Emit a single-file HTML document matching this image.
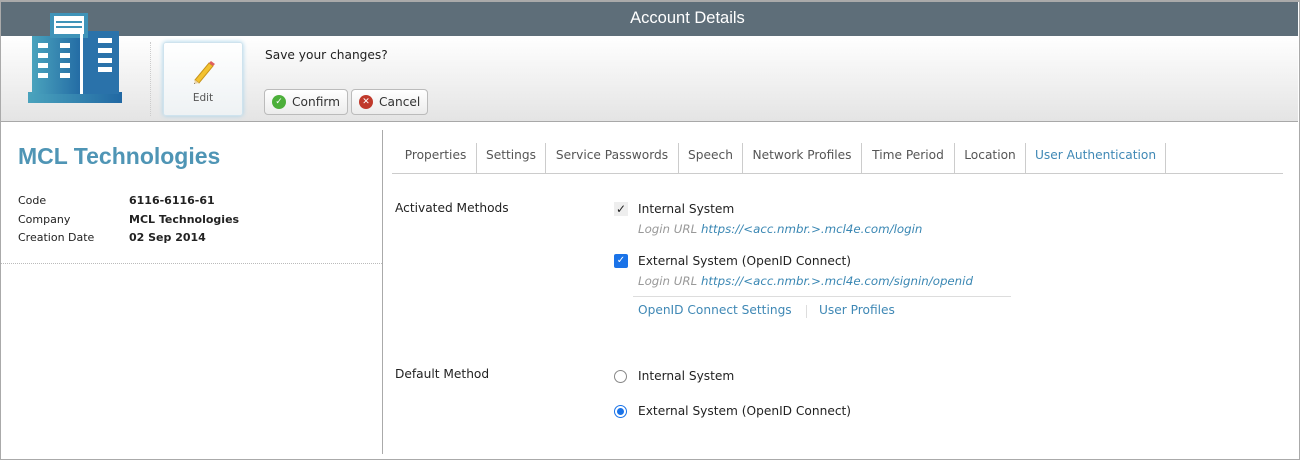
<!DOCTYPE html>
<html><head><meta charset="utf-8"><style>
*{margin:0;padding:0;box-sizing:border-box}
body{width:1300px;height:460px;background:#fff;font-family:"DejaVu Sans","Liberation Sans",sans-serif;font-size:12px;color:#222;position:relative;overflow:hidden}
.a{position:absolute;white-space:nowrap}
#frame{position:absolute;left:0;top:0;width:1300px;height:460px;border:1px solid #aaa;border-top:2px solid #aaa}
#title{position:absolute;left:1px;top:2px;width:1297px;height:34px;background:#5e6e79;color:#fff;font-family:"Liberation Sans",sans-serif;font-size:16.5px;padding-left:76px;text-align:center;line-height:33px}
#tool{position:absolute;left:1px;top:36px;width:1297px;height:86px;background:linear-gradient(#fff,#e4e4e4);border-bottom:1px solid #a8a8a8}
.btn{position:absolute;height:26px;border:1px solid #bbb;border-radius:4px;background:linear-gradient(#fff,#ececec);font-size:12.2px;color:#333;line-height:24px;padding-left:27px}
.ic{position:absolute;left:7px;top:5px;width:14px;height:14px;border-radius:50%;color:#fff;font-size:9px;line-height:14px;text-align:center;font-weight:bold}
.tab{position:absolute;top:143px;height:30px;border-right:1px solid #ccc;font-size:12.2px;color:#555;line-height:25px;text-align:center}
.gray{color:#999;font-style:italic;font-size:11.8px}
.link{color:#3a87b3;font-style:italic}
.t{font-size:12.2px}
</style></head><body>
<div id="frame"></div>
<div id="title">Account Details</div>
<div id="tool"></div>
<svg class="a" style="left:26px;top:12px" width="100" height="94" viewBox="26 12 100 94">
<defs><linearGradient id="g" x1="0" x2="1"><stop offset="0" stop-color="#4aa3bd"/><stop offset="1" stop-color="#2168a3"/></linearGradient></defs>
<rect x="28" y="92" width="94" height="11" fill="url(#g)"/>
<rect x="32" y="36" width="52" height="58" fill="url(#g)"/>
<rect x="82" y="31" width="37" height="63" fill="#2a72aa"/>
<rect x="50" y="13" width="38" height="25" fill="#3f93b8"/>
<rect x="54" y="16" width="30" height="18" fill="#fff"/>
<rect x="56" y="21" width="26" height="2" fill="#3f93b8"/><rect x="56" y="26" width="26" height="2" fill="#3f93b8"/>
<rect x="80" y="34" width="3" height="60" fill="#fff"/>
<g fill="#fff"><rect x="38" y="43" width="10" height="5"/><rect x="60" y="43" width="10" height="5"/><rect x="38" y="53" width="10" height="5"/><rect x="60" y="53" width="10" height="5"/><rect x="38" y="63" width="10" height="5"/><rect x="60" y="63" width="10" height="5"/><rect x="38" y="73" width="10" height="5"/><rect x="60" y="73" width="10" height="5"/>
<rect x="98" y="38" width="14" height="5"/><rect x="98" y="48" width="14" height="5"/><rect x="98" y="58" width="14" height="5"/><rect x="98" y="67" width="14" height="5"/></g>
</svg>
<div class="a" style="left:150px;top:42px;height:74px;border-left:1px dotted #ccc"></div>
<div class="a" style="left:163px;top:42px;width:80px;height:74px;border:1px solid #cfe3ee;border-radius:3px;background:linear-gradient(#fff,#eef2f4);box-shadow:0 0 5px #a9d3ea"></div>
<svg class="a" style="left:189px;top:57px" width="28" height="28" viewBox="0 0 28 28"><path d="M6 23 L20 6 L24 9 L10 26 Z" fill="#f3c230" stroke="#c8951a"/><path d="M6 23 L5 27 L10 26 Z" fill="#e9d3a8"/><path d="M5 26 L5 27 L6 27Z" fill="#333"/><path d="M20 6 L22 4 L26 7 L24 9Z" fill="#e06060"/></svg>
<div class="a" style="left:163px;top:92px;width:80px;text-align:center;font-size:10.5px;color:#555">Edit</div>
<div class="a t" style="left:265px;top:48px">Save your changes?</div>
<div class="btn a" style="left:264px;top:89px;width:84px"><span class="ic" style="background:#4caf3a">✓</span>Confirm</div>
<div class="btn a" style="left:351px;top:89px;width:77px"><span class="ic" style="background:#c0392b">✕</span>Cancel</div>

<div class="a" style="left:18px;top:143px;font-family:'Liberation Sans',sans-serif;font-weight:bold;font-size:23px;color:#4f95b5">MCL Technologies</div>
<div class="a" style="left:18px;top:194px;font-size:11px">Code</div>
<div class="a" style="left:18px;top:213px;font-size:11px">Company</div>
<div class="a" style="left:18px;top:231px;font-size:11px">Creation Date</div>
<div class="a" style="left:129px;top:194px;font-size:11px;font-weight:bold">6116-6116-61</div>
<div class="a" style="left:129px;top:213px;font-size:11px;font-weight:bold">MCL Technologies</div>
<div class="a" style="left:129px;top:231px;font-size:11px;font-weight:bold">02 Sep 2014</div>
<div class="a" style="left:1px;top:263px;width:381px;border-top:1px dotted #bbb"></div>
<div class="a" style="left:382px;top:130px;height:324px;border-left:1px solid #aaa"></div>

<div class="a" style="left:392px;top:173px;width:891px;border-top:1px solid #ccc"></div>
<div class="tab" style="left:395px;width:82px">Properties</div>
<div class="tab" style="left:477px;width:69px">Settings</div>
<div class="tab" style="left:546px;width:133px">Service Passwords</div>
<div class="tab" style="left:679px;width:64px">Speech</div>
<div class="tab" style="left:743px;width:119px">Network Profiles</div>
<div class="tab" style="left:862px;width:93px">Time Period</div>
<div class="tab" style="left:955px;width:71px">Location</div>
<div class="tab" style="left:1026px;width:140px;color:#3f88b5">User Authentication</div>

<div class="a t" style="left:395px;top:201px">Activated Methods</div>
<div class="a" style="left:614px;top:202px;width:14px;height:14px;background:#eee;font-size:12px;line-height:14px;text-align:center">✓</div>
<div class="a t" style="left:638px;top:202px">Internal System</div>
<div class="a gray" style="left:638px;top:222px">Login URL <span class="link">https://&lt;acc.nmbr.&gt;.mcl4e.com/login</span></div>
<div class="a" style="left:614px;top:254px;width:14px;height:14px;background:#1a73e8;border-radius:2px;color:#fff;font-size:10px;line-height:14px;text-align:center;font-weight:bold">✓</div>
<div class="a t" style="left:638px;top:254px">External System (OpenID Connect)</div>
<div class="a gray" style="left:638px;top:274px">Login URL <span class="link">https://&lt;acc.nmbr.&gt;.mcl4e.com/signin/openid</span></div>
<div class="a" style="left:633px;top:296px;width:378px;border-top:1px solid #ddd"></div>
<div class="a t" style="left:638px;top:303px;color:#3f88b5">OpenID Connect Settings</div>
<div class="a" style="left:806px;top:305px;height:13px;border-left:1px solid #ddd"></div>
<div class="a t" style="left:819px;top:303px;color:#3f88b5">User Profiles</div>

<div class="a t" style="left:395px;top:367px">Default Method</div>
<div class="a" style="left:614px;top:370px;width:13px;height:13px;border:1px solid #888;border-radius:50%"></div>
<div class="a t" style="left:638px;top:369px">Internal System</div>
<div class="a" style="left:614px;top:405px;width:13px;height:13px;border:1px solid #1a73e8;border-radius:50%;background:#fff"><div style="position:absolute;left:2px;top:2px;width:7px;height:7px;border-radius:50%;background:#1a73e8"></div></div>
<div class="a t" style="left:638px;top:404px">External System (OpenID Connect)</div>
</body></html>
